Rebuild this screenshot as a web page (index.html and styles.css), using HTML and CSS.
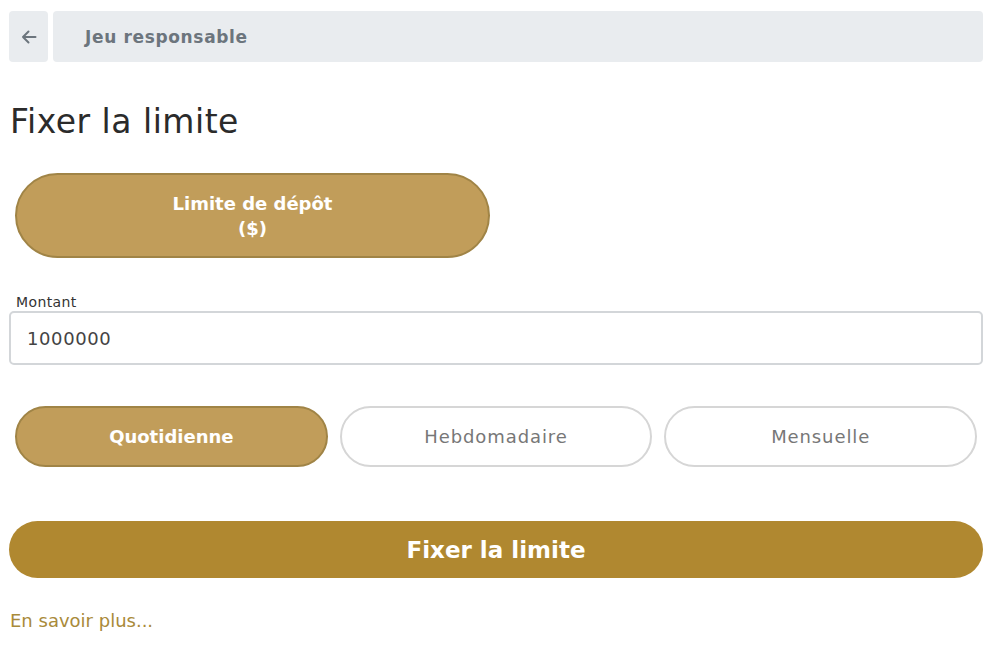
FILE: index.html
```html
<!DOCTYPE html>
<html lang="fr">
<head>
    <meta charset="UTF-8">
    <meta name="viewport" content="width=device-width, initial-scale=1.0">
    <title>Jeu responsable</title>
    <link rel="stylesheet" href="styles.css">
</head>
<body>
    <div class="page">
        <div class="topbar">
            <button class="back" type="button">
                <svg width="16" height="14" viewBox="0 0 16 14" fill="none" stroke="#6c757d" stroke-width="2" stroke-linecap="round" stroke-linejoin="round">
                    <path d="M14.5 7H2M7.5 1.5L2 7l5.5 5.5"/>
                </svg>
            </button>
            <div class="crumb">Jeu responsable</div>
        </div>

        <h1 class="title">Fixer la limite</h1>

        <div class="types">
            <button class="pill big active" type="button">Limite de dépôt<br>($)</button>
        </div>

        <form class="limit-form">
            <label class="field-label" for="montant">Montant</label>
            <input class="amount" type="text" id="montant" value="1000000">

            <div class="periods">
                <button class="pill active" type="button">Quotidienne</button>
                <button class="pill" type="button">Hebdomadaire</button>
                <button class="pill" type="button">Mensuelle</button>
            </div>

            <button class="submit" type="submit">Fixer la limite</button>
        </form>

        <a class="more" href="#">En savoir plus...</a>
    </div>
</body>
</html>
```

FILE: styles.css
```css
body {
    margin: 0;
    font-family: "DejaVu Sans", sans-serif;
    color: #333;
    background: #fff;
}

.page {
    padding: 11px 14px 0 9px;
}

.topbar {
    display: flex;
    gap: 5px;
    height: 51px;
}

.back {
    width: 39px;
    border: none;
    border-radius: 4px;
    background-color: #e9ecef;
    display: flex;
    align-items: center;
    justify-content: center;
    padding: 0;
}

.crumb {
    flex: 1;
    background-color: #e9ecef;
    border-radius: 4px;
    display: flex;
    align-items: center;
    padding-left: 32px;
    font-size: 17px;
    font-weight: bold;
    letter-spacing: 0.65px;
    color: #6c757d;
}

.title {
    margin: 40px 0 0 1px;
    font-size: 33px;
    font-weight: 500;
    line-height: 40px;
    letter-spacing: 0.5px;
    color: #2b2b2b;
}

.types {
    display: grid;
    grid-template-columns: 1fr 1fr;
    margin-top: 31px;
}

.pill {
    margin: 0 6px;
    height: 61px;
    border: 2px solid #d6d6d6;
    border-radius: 40px;
    background: #fff;
    font-family: inherit;
    font-size: 18px;
    letter-spacing: 0.9px;
    color: #777;
}

.pill.active {
    background-color: #c19d5a;
    border-color: #a08446;
    color: #fff;
    font-weight: bold;
    letter-spacing: 0;
}

.pill.big {
    height: 85px;
    border-radius: 43px;
    line-height: 25px;
}

.limit-form {
    margin-top: 36px;
}

.field-label {
    display: block;
    margin-left: 7px;
    font-size: 14px;
    line-height: 17px;
    letter-spacing: 0.4px;
    color: #333;
}

.amount {
    display: block;
    width: 100%;
    box-sizing: border-box;
    height: 54px;
    margin-top: 0;
    padding: 0 16px;
    border: 2px solid #d3d6d9;
    border-radius: 5px;
    font-family: inherit;
    font-size: 18px;
    letter-spacing: 0.6px;
    color: #444;
}

.periods {
    display: grid;
    grid-template-columns: 1fr 1fr 1fr;
    margin-top: 41px;
}

.submit {
    display: block;
    width: 100%;
    height: 57px;
    margin-top: 54px;
    border: none;
    border-radius: 29px;
    background-color: #b08830;
    color: #fff;
    font-family: inherit;
    font-size: 23px;
    font-weight: bold;
}

.more {
    display: inline-block;
    margin: 32px 0 0 1px;
    font-size: 18px;
    color: #a98a3a;
    text-decoration: none;
}
```
